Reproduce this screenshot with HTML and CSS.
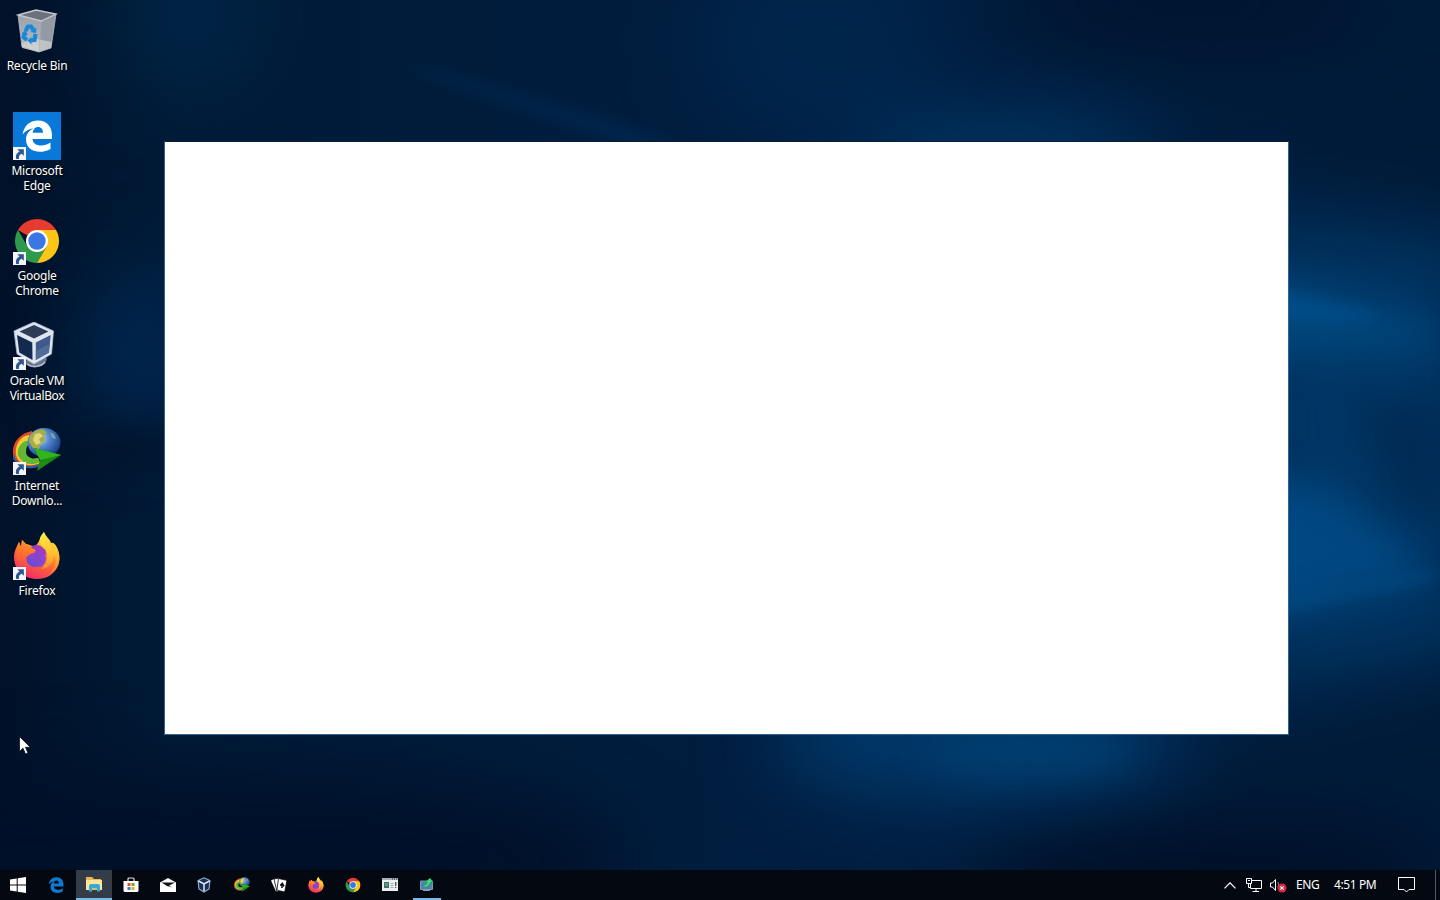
FILE: index.html
```html
<!DOCTYPE html>
<html lang="en">
<head>
<meta charset="utf-8">
<title>Desktop</title>
<link rel="stylesheet" href="styles.css">
</head>
<body>
<svg class="defs" width="0" height="0" aria-hidden="true">
  <defs>
    <linearGradient id="ffBody" x1=".8" y1="0" x2=".3" y2="1"><stop offset="0" stop-color="#fff04a"/><stop offset=".3" stop-color="#ffb52e"/><stop offset=".6" stop-color="#ff6338"/><stop offset="1" stop-color="#f02c68"/></linearGradient>
    <linearGradient id="ffFlame" x1=".5" y1="0" x2=".5" y2="1"><stop offset="0" stop-color="#fff04a"/><stop offset=".5" stop-color="#ffc02d"/><stop offset="1" stop-color="#ff7638"/></linearGradient>
    <linearGradient id="ffHead" x1=".5" y1="0" x2=".3" y2="1"><stop offset="0" stop-color="#ff9a28"/><stop offset=".5" stop-color="#ff6b2f"/><stop offset="1" stop-color="#f23c5c"/></linearGradient>
    <linearGradient id="ffCore" x1="1" y1="0" x2="0" y2="1"><stop offset="0" stop-color="#a93cc8"/><stop offset="1" stop-color="#5a50d8"/></linearGradient>
    <radialGradient id="globe" cx=".35" cy=".35" r=".7"><stop offset="0" stop-color="#d2e6ee"/><stop offset=".45" stop-color="#5289cf"/><stop offset="1" stop-color="#173e85"/></radialGradient>
    <linearGradient id="arrowGreen" x1="0" y1="0" x2="1" y2="1"><stop offset="0" stop-color="#075b0e"/><stop offset=".5" stop-color="#1c8f14"/><stop offset="1" stop-color="#0c6910"/></linearGradient>
    <linearGradient id="binSide" x1="0" y1="0" x2="0" y2="1"><stop offset="0" stop-color="#9ba2ad"/><stop offset=".7" stop-color="#aeb3bb"/><stop offset="1" stop-color="#d2d6d7"/></linearGradient>
    <symbol id="bin" viewBox="0 0 48 48">
      <path d="M5 8 28 14 26 45 9 40Z" fill="url(#binSide)"/>
      <path d="M28 14 43 7 38 41 26 45Z" fill="#949aa4"/>
      <path d="M8.500 36 24 32 39 35 38 41 26 45 9 41Z" fill="#d0d3d0" opacity=".7"/>
      <path d="M5 8 23 3 43 7 28 14Z" fill="#6b727e" stroke="#c5cad0" stroke-width="1.300"/>
      <path d="M5 8 9 40 26 45 28 14M26 45 38 41 43 7" fill="none" stroke="#b8bdc5" stroke-width=".8"/>
      <g fill="none" stroke="#1689dc" stroke-width="4.200"><path d="M12.500 24 15 19.500 18 19.500 20.500 23"/><path d="M22.500 27 21.500 33 18 33.500"/><path d="M14 33 10.500 30 12 26"/></g>
      <path d="M17.500 25 23 26 23.500 20.500ZM18.500 30 14.500 33.500 18.500 37.500ZM8.500 27 12 23 15 28Z" fill="#1689dc"/>
    </symbol>
    <symbol id="edge" viewBox="0 0 32 32">
      <path d="M1.500 14.500C3 6 8.500.500 17 .500C25.500.500 31 6.500 31 15V19H11.500C12 23.500 15.500 25.500 20 25.500C23.500 25.500 26.500 24.500 29.500 22.500V29C26.500 30.900 22.500 31.800 19 31.800C10 31.800 5 26.500 5 19.500C5 14.500 8 10.500 12.500 8.300C8 9 4.500 11 1.500 14.500ZM11.700 12.800H22C22 9.300 20 7 17 7C14 7 12.200 9.500 11.700 12.800Z" fill="currentColor"/>
    </symbol>
    <symbol id="chrome" viewBox="0 0 48 48">
      <path d="M24 24 4.950 13A22 22 0 0 1 43.050 13Z" fill="#e63b2f"/>
      <path d="M14.470 29.500 4.950 13A22 22 0 0 0 24 46L33.530 29.500Z" fill="#2e9a4b"/>
      <path d="M24 13H43.050A22 22 0 0 1 24 46L33.530 29.500Z" fill="#fdc516"/>
      <circle cx="24" cy="24" r="11" fill="#fff"/><circle cx="24" cy="24" r="8.700" fill="#3a77e5"/>
    </symbol>
    <symbol id="vbox" viewBox="0 0 48 48">
      <path d="M12 39C12 48 33 48 34 36L24 34Z" fill="#68728c"/><path d="M14 42C19 46 28 45 32 40" fill="none" stroke="#b5bdce" stroke-width="1.500"/>
      <path d="M21 0 40.500 9 38.500 32 21 42 4 32 1 9Z" fill="#dfe5ef"/>
      <path d="M6.500 9.500 21 3 35.500 9.500 21 16.500Z" fill="#2e3c58"/><path d="M4 13 19.300 20.500 19.500 38 6.300 30.500Z" fill="#122a50"/><path d="M22.800 20.500 37.700 13 36 30.500 22.800 38Z" fill="#3d5a88"/>
      <path d="m22.800 29 13.700-7-.6 8.500-13.100 7.500z" fill="#4f6c99"/>
      <path d="m21 0 19.500 9-2 23-17.500 10L4 32 1 9Z" fill="none" stroke="#a9bad4" stroke-width=".8"/>
    </symbol>
    <symbol id="idm" viewBox="0 0 48 48">
      <path d="M19 4C8 6-1 15 0 26C1 37 16 43 28 38L25 32C15 34 9 30 9 24C9 15 14 11 20 11Z" fill="#e14c2b"/>
      <path d="M12 9C6 12 2 19 3 27C4 37 17 41 27 36L25 31C17 34 11 30 11 25C10 18 14 14 18 13L16 8Z" fill="#f3cf2a"/>
      <path d="M12 14C8 16 4 21 5 28C8 36 17 40 27 35L25 31C18 33 13 29 13 25C13 19 16 16 19 15Z" fill="#62b634"/>
      <path d="M0 28C2 39 16 43 27 38" fill="none" stroke="#3159b1" stroke-width="2"/>
      <ellipse cx="31" cy="15.500" rx="16.500" ry="14.500" fill="url(#globe)"/>
      <path d="M17 9 22 4 29 2 34 5 30 9 33 13 28 16 26 22 20 21 16 15Z" fill="#a6ad42"/><path d="m22 7 5-1 3 3-4 3 2 4-5 2-3-5z" fill="#e1d678"/>
      <path d="m37 5 4 2 2 5-4-1z" fill="#7c9cad"/>
      <path d="M21 21 48 28 24 44 27 33Z" fill="url(#arrowGreen)"/><path d="M21 21 48 28 27 33Z" fill="#32b51c"/>
    </symbol>
    <symbol id="firefox" viewBox="0 0 48 48">
      <path d="M31 0C33 5 37 7 38 11C40 10 42 12 43 14C47 20 47 29 45 34C41 43 33 47 24 47C11 47 1 38 1 25C1 19 4 14 6 10L8 15L9 8L13 12C15 12 18 14 21 14C25 14 26 7 31 0Z" fill="url(#ffBody)"/>
      <path d="M31 0C25 6 26 11 30 15C37 21 35 31 28 37C35 37 40 31 41 23C45 27 42 38 35 43C50 36 48 20 42 13C42 15 41 17 40 17C37 10 33 8 31 0Z" fill="url(#ffFlame)"/>
      <circle cx="23" cy="26" r="10" fill="url(#ffCore)"/>
      <path d="M17 16C21 12 27 12 31 17C33 17 32 20 34 23C29 20 27 20 25 21C24 24 19 25 15 26Z" fill="#9a3dc1"/>
      <path d="M6 10L8 15L9 8L13 12C16 12 17 16 23 18L21 21C18 21 15 23 13 26C13 33 19 37 27 34C23 41 13 40 9 34C3 29 1 20 6 10Z" fill="url(#ffHead)"/>
    </symbol>
    <symbol id="shortcut" viewBox="0 0 12 12"><path d="M0 0H12V12H0Z" fill="#f3f5f8"/><path d="M4 2H10V8L8 6.200C5.500 7.200 5.400 8.800 5.500 11H3C2 7.700 3.600 5.200 6 4.100Z" fill="#2d568f"/></symbol>
  </defs>
</svg>

<main class="desktop">
  <svg class="wallpaper" viewBox="0 0 1440 900" preserveAspectRatio="none" aria-hidden="true">
    <defs>
      <filter id="soft" x="-80%" y="-80%" width="260%" height="260%" color-interpolation-filters="sRGB"><feGaussianBlur stdDeviation="38"/></filter>
      <filter id="mid" x="-60%" y="-60%" width="220%" height="220%" color-interpolation-filters="sRGB"><feGaussianBlur stdDeviation="18"/></filter>
      <filter id="fine" x="-60%" y="-60%" width="220%" height="220%" color-interpolation-filters="sRGB"><feGaussianBlur stdDeviation="7"/></filter>
      <linearGradient id="base"><stop offset="0" stop-color="#001128"/><stop offset=".12" stop-color="#001b38"/><stop offset=".6" stop-color="#001e41"/><stop offset="1" stop-color="#001b39"/></linearGradient>
    </defs>
    <path d="M0 0H1440V900H0Z" fill="url(#base)"/>
    <g filter="url(#soft)">
      <ellipse cx="820" cy="40" rx="120" ry="110" fill="#00254b"/>
      <ellipse cx="190" cy="15" rx="70" ry="80" fill="#002445"/>
      <ellipse cx="1010" cy="155" rx="150" ry="45" fill="#003360"/>
      <ellipse cx="1190" cy="5" rx="180" ry="50" fill="#001430"/>
      <path d="M1240 215 1370 230 1480 240V650L1240 690Z" fill="#003665"/>
      <ellipse cx="140" cy="350" rx="55" ry="85" fill="#00264f"/>
      <ellipse cx="980" cy="740" rx="210" ry="60" fill="#003a6c"/>
      <ellipse cx="200" cy="860" rx="430" ry="90" fill="#001029"/>
      <ellipse cx="1210" cy="875" rx="230" ry="55" fill="#000f28"/>
    </g>
    <g filter="url(#mid)">
      <path d="M1250 270 1440 325V350L1250 360Z" fill="#004579"/>
      <path d="M1250 475 1330 490 1430 570 1250 620Z" fill="#004882"/>
      <path d="M1350 400 1450 405V512L1400 510Z" fill="#002b55"/>
      <path d="M70 437H190V461H70Z" fill="#001128"/>
      <ellipse cx="1030" cy="752" rx="100" ry="20" fill="#003f71"/>
    </g>
    <g filter="url(#fine)" opacity=".5">
      <path d="M430 70 690 145H630L400 66Z" fill="#00315d"/>
      <path d="M1270 288 1385 315 1360 322 1270 320Z" fill="#005699"/>
      <path d="M1270 603 1430 572 1440 578 1270 612Z" fill="#005594"/>
    </g>
  </svg>

  <section class="icons">
    <div class="shortcut"><div class="picture"><svg><use href="#bin"/></svg></div><div class="label">Recycle Bin</div></div>
    <div class="shortcut"><div class="picture edge-tile"><svg class="edge-large"><use href="#edge"/></svg><svg class="link"><use href="#shortcut"/></svg></div><div class="label">Microsoft<br>Edge</div></div>
    <div class="shortcut"><div class="picture"><svg><use href="#chrome"/></svg><svg class="link"><use href="#shortcut"/></svg></div><div class="label">Google<br>Chrome</div></div>
    <div class="shortcut"><div class="picture"><svg><use href="#vbox"/></svg><svg class="link"><use href="#shortcut"/></svg></div><div class="label tight">Oracle VM<br>VirtualBox</div></div>
    <div class="shortcut"><div class="picture"><svg><use href="#idm"/></svg><svg class="link"><use href="#shortcut"/></svg></div><div class="label">Internet<br>Downlo...</div></div>
    <div class="shortcut"><div class="picture"><svg><use href="#firefox"/></svg><svg class="link"><use href="#shortcut"/></svg></div><div class="label">Firefox</div></div>
  </section>

  <section class="window"></section>
  <svg class="pointer" viewBox="0 0 12 19"><path d="M.5.500V15.500L4 12.200 6.500 18 9 17 6.500 11.300H11.300Z" fill="#fff" stroke="#071020" stroke-width=".8"/></svg>
</main>

<footer class="taskbar">
  <div class="start"><svg width="16" height="16" viewBox="0 0 16 16"><path d="M0 2.500 6.700 1.500V7.500H0ZM7.700 1.300 16 0V7.500H7.700ZM0 8.500H6.700V14.500L0 13.500ZM7.700 8.500H16V16L7.700 14.700Z" fill="#fff"/></svg></div>
  <nav class="apps">
    <div class="app nudge"><svg class="edge-small" width="16" height="16"><use href="#edge"/></svg></div>
    <div class="app active"><svg width="18" height="16" viewBox="0 0 18 16"><path d="M1 1H7L9 3H16V14H1Z" fill="#e9b954"/><path d="M1 4H17V14H1Z" fill="#ffe59a"/><path d="M4 10Q4 8 6 8H13Q15 8 15 10V15.500H12V12H7V15.500H4Z" fill="#36a9db"/><path d="M7 12H12V14H7Z" fill="#d9bd6b"/></svg></div>
    <div class="app"><svg width="16" height="16" viewBox="0 0 16 16"><path d="M5 5V2Q5 1 6 1H10Q11 1 11 2V5" fill="none" stroke="#ddd" stroke-width="1.200"/><path d="M.5 4H15.500V14L14.500 15H1.500L.5 14Z" fill="#fff"/><path d="M4.500 6H7.500V9H4.500Z" fill="#e84b24"/><path d="M8.500 6H11.500V9H8.500Z" fill="#73a51e"/><path d="M4.500 10H7.500V13H4.500Z" fill="#2783ca"/><path d="M8.500 10H11.500V13H8.500Z" fill="#eaad13"/></svg></div>
    <div class="app"><svg width="16" height="14" viewBox="0 0 16 14"><path d="M0 4.500 8 0 16 4.500V14H0Z" fill="#fff"/><path d="M1.500 4.500H15L9 7.800 12.500 9.500 7 8Z" fill="#10151d"/></svg></div>
    <div class="app nudge"><svg class="box-small" viewBox="0 0 16 16"><path d="M8 .8 14 3.500 13 12 8 15 3 12 2 3.500Z" fill="#172f57" stroke="#91aac9" stroke-width="1.200"/><path d="m2.500 4 5.500 3 5.500-3M8 7v7" fill="none" stroke="#e5edf7" stroke-width="1.500"/></svg></div>
    <div class="app"><svg class="globe-small"><use href="#idm"/></svg></div>
    <div class="app"><svg width="18" height="16" viewBox="0 0 18 16"><path d="m1 3.500 4-2 4 11-3 2z" fill="#fff"/><path d="m4 2 5-1 2 12-4 2z" fill="#fff" stroke="#05080e" stroke-width=".8"/><path d="m8.500 1.500 7 1.500q1.500.3 1.200 1.500l-1.700 9q-.3 1.500-1.500 1.200l-5.500-1.200q-1.300-.3-1-1.500z" fill="#fff" stroke="#05080e" stroke-width=".8"/><path d="m12.300 5 2.300 3.600q-.7 1.700-2 .8l.3 1.600h-2l.7-1.800q-1.600.4-1.700-1.400z" fill="#111820"/></svg></div>
    <div class="app"><svg width="16" height="16"><use href="#firefox"/></svg></div>
    <div class="app"><svg class="chrome-small"><use href="#chrome"/></svg></div>
    <div class="app"><svg width="16" height="14" viewBox="0 0 16 14"><path d="M0 0H16V13H0Z" fill="#eceef0"/><path d="M0 0H16V2H0Z" fill="#a5aeb9"/><path d="M10 1h1m1 0h1m1 0h1" stroke="#303942"/><path d="M2 4H7V10H2Z" fill="#416f72"/><path d="M3 5h3v3H3Z" fill="#5b9d7c"/><path d="M8.500 5.500h3m-3 2h3m-3 2h3" stroke="#a1adb7"/><path d="M13.700 4V8M13.700 9v1" stroke="#35516a" stroke-width="1.300"/></svg></div>
    <div class="app running nudge"><svg width="15" height="15" viewBox="0 0 15 15"><path d="M1.500 3H13.500V11.500H1.500Z" fill="#4d83b3" stroke="#8199af"/><path d="M4 12.500H11" stroke="#91a0ab"/><path d="m4.500 6 1.500 4L9 8l3-4h2L11 0 6.500 4 8.500 4.500 6.500 7Z" fill="#35df79" stroke="#148746" stroke-width=".4"/></svg></div>
  </nav>
  <div class="tray">
    <svg class="chevron" viewBox="0 0 12 7"><path d="m.5 6.300 5.500-5.500 5.500 5.500"/></svg>
    <svg class="network" viewBox="0 0 17 14"><path d="M5.500 2.500H15.500V10.500H4.500V6M10 11v2M6.500 13.500H13M.5.500H5.500V5.500H.5ZM2.500 6V9.500H4"/><path d="M2 2.500H4"/></svg>
    <svg class="volume" viewBox="0 0 17 15"><path d="M.5 5H2.500L5.500 1.500V12.500L2.500 9H.5Z" fill="none" stroke="#fff"/><path d="M8 4Q9 7 8 9" fill="none" stroke="#8a929c"/><circle cx="12" cy="10" r="4.500" fill="#d32b43"/><path d="m10.300 8.300 3.400 3.400m0-3.400-3.400 3.400" stroke="#fff" stroke-width="1.100"/></svg>
    <span class="language">ENG</span>
    <time>4:51 PM</time>
    <svg class="notice" viewBox="0 0 17 16"><path d="M.5.500H16.500V12.500H11L8.500 15 6 12.500H.5Z"/></svg>
    <div class="show-desktop"></div>
  </div>
</footer>
</body>
</html>
```
FILE: styles.css
```css
* {
  box-sizing: border-box;
}

body {
  margin: 0;
  width: 1440px;
  height: 900px;
  overflow: hidden;
  display: flex;
  flex-direction: column;
  background: #001027;
  color: #fff;
  font-family: "Noto Sans", sans-serif;
  font-size: 12px;
}

svg {
  display: block;
  flex-shrink: 0;
}

.defs {
  position: absolute;
}

.desktop {
  position: relative;
  height: 870px;
}

.wallpaper {
  position: absolute;
  inset: 0;
  width: 1440px;
  height: 900px;
}

.icons {
  position: relative;
  width: 74px;
  padding-top: 7px;
}

.shortcut {
  height: 105px;
  display: flex;
  flex-direction: column;
  align-items: center;
  gap: 3px;
}

.picture {
  position: relative;
  width: 48px;
  height: 48px;
}

.picture svg {
  width: 48px;
  height: 48px;
}

.picture .link {
  position: absolute;
  left: 0;
  bottom: 0;
  width: 13px;
  height: 13px;
}

.edge-tile {
  display: grid;
  place-items: center;
  background: #0879d8;
}

.picture .edge-large {
  width: 32px;
  height: 32px;
  color: #fff;
}

.label {
  line-height: 15px;
  font-size: 12px;
  letter-spacing: -0.22px;
  text-align: center;
  white-space: nowrap;
  text-shadow: 1px 1px 2px #000;
}

.label.tight {
  letter-spacing: -0.35px;
}

.window {
  position: absolute;
  left: 164px;
  top: 141px;
  width: 1125px;
  height: 594px;
  border: 1px solid #316491;
  border-top-color: #07203c;
  background: #fff;
}

.pointer {
  position: absolute;
  left: 19px;
  top: 736px;
  width: 12px;
  height: 19px;
}

.taskbar {
  position: relative;
  height: 30px;
  display: flex;
  align-items: stretch;
  background: #040911;
}

.start {
  width: 36px;
  display: grid;
  place-items: center;
}

.apps {
  margin-left: 3px;
  display: flex;
  gap: 1px;
}

.app {
  width: 36px;
  display: flex;
  align-items: center;
  justify-content: center;
}

.nudge {
  padding-right: 2px;
}

.active {
  background: #343c47;
  border-bottom: 2px solid #76b9ed;
}

.running {
  background: linear-gradient(#76b9ed, #76b9ed) center bottom / 28px 2px no-repeat;
}

.edge-small {
  color: #0f7ad2;
}

.box-small {
  width: 16px;
  height: 16px;
}

.globe-small,
.chrome-small {
  width: 16px;
  height: 16px;
}

.tray {
  margin-left: auto;
  display: flex;
  align-items: center;
}

.tray svg {
  fill: none;
  stroke: #fff;
  stroke-width: 1;
}

.tray .chevron {
  width: 12px;
  height: 7px;
  margin-right: 10px;
  stroke-width: 1.2;
}

.network {
  width: 17px;
  height: 14px;
  margin-right: 7px;
}

.tray .volume {
  width: 17px;
  height: 15px;
  margin-right: 9px;
  stroke: none;
}

.language {
  width: 38px;
  letter-spacing: -0.4px;
  line-height: 16px;
  padding-bottom: 1px;
}

time {
  width: 64px;
  letter-spacing: -0.4px;
  line-height: 16px;
  padding-bottom: 1px;
}

.notice {
  width: 17px;
  height: 16px;
  margin-right: 20px;
}

.show-desktop {
  width: 5px;
  height: 30px;
  border-left: 1px solid #515963;
}
```
